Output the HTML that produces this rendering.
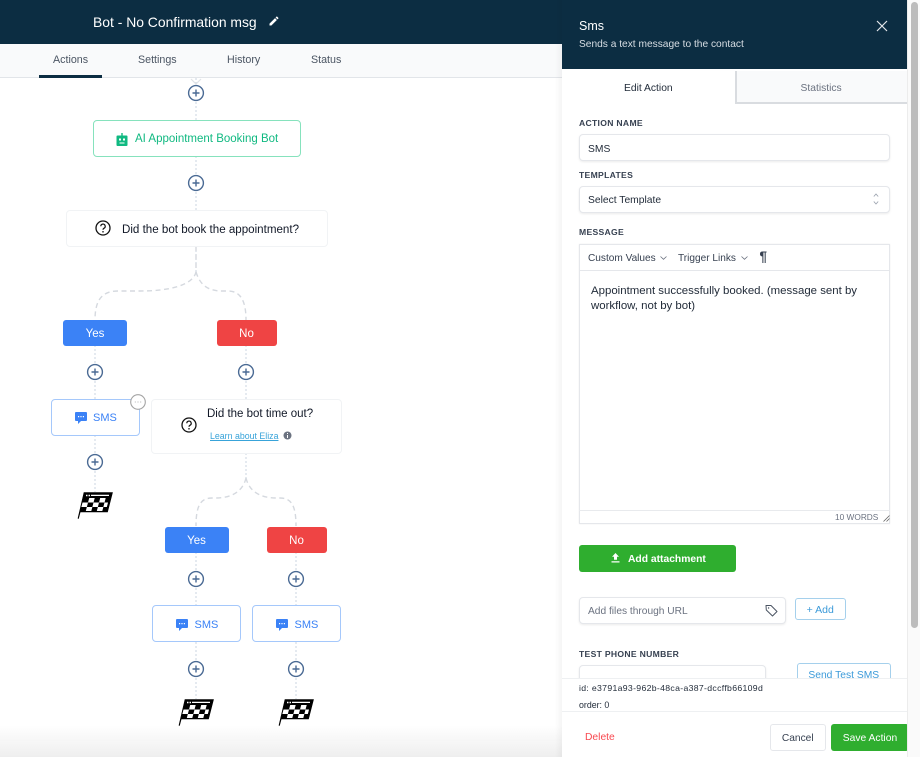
<!DOCTYPE html>
<html><head><meta charset="utf-8"><style>
html,body{margin:0;padding:0;width:920px;height:757px;overflow:hidden;background:#fff;font-family:"Liberation Sans",sans-serif}
#r{position:relative;width:920px;height:757px;overflow:hidden;filter:blur(.25px)}
.a{position:absolute;box-sizing:border-box}
.t{position:absolute;white-space:nowrap;line-height:16px;height:16px}
.c{display:flex;align-items:center;justify-content:center}
.b{padding-top:2px}
.lb{font-size:8.600px;font-weight:bold;color:#374151;letter-spacing:.3px;left:579px}
.in{background:#fff;border:1px solid #e5e7eb;border-radius:4px;box-shadow:0 1px 2px rgba(0,0,0,.08)}
svg{position:absolute;overflow:visible}
</style></head><body><div id="r">

<div class="a" style="left:0;top:0;width:562px;height:44px;background:#0c2d42"></div>
<div class="t" style="left:93px;top:14px;font-size:13.900px;color:#fff">Bot - No Confirmation msg</div>
<svg style="left:268px;top:15px" width="12" height="12" viewBox="0 0 24 24"><path fill="#fff" d="M3 17.250V21h3.750L17.810 9.940l-3.750-3.750L3 17.250zM20.710 7.040a1 1 0 0 0 0-1.410l-2.340-2.340a1 1 0 0 0-1.410 0l-1.830 1.830 3.750 3.750 1.830-1.830z"/></svg>
<div class="a" style="left:0;top:44px;width:562px;height:34px;background:#f9fafb;border-bottom:1px solid #e2e5e9"></div>
<div class="a" style="left:39px;top:74.500px;width:63px;height:3px;background:#0c2d42"></div>
<div class="t" style="left:53px;top:52px;font-size:10.700px;color:#4b5563">Actions</div>
<div class="t" style="left:138px;top:52px;font-size:10.700px;color:#4b5563">Settings</div>
<div class="t" style="left:227px;top:52px;font-size:10.700px;color:#4b5563">History</div>
<div class="t" style="left:311px;top:52px;font-size:10.700px;color:#4b5563">Status</div>

<svg style="left:0;top:0" width="562" height="757">
<g fill="none" stroke="#cbd5e1" stroke-width="1" stroke-dasharray="2 2">
<path d="M196 78V120M196 156V210M196 246V272M95 345V399M95 435V492M246 345V399M246 453V478M196 552V605M196 642V699M296 552V605M296 642V699"/>
</g>
<path d="M191 79L196 84L201 79" fill="none" stroke="#e0e3e7" stroke-width="1.200"/>
<g fill="none" stroke="#d5d9df" stroke-width="1.400" stroke-dasharray="5 3.500">
<path d="M196 246V272C193 285 170 291 140 291H118C102 291 95 300 95 320"/>
<path d="M196 272C200 285 208 291 222 291H228C240 291 246 300 246 320"/>
<path d="M246 478C243 491 232 498 216 498H212C201 498 196 505 196 526"/>
<path d="M246 478C249 491 260 498 276 498H280C291 498 296 505 296 526"/>
</g>
<g fill="#fff" stroke="#4a6a94" stroke-width="1.400">
<circle cx="196" cy="93" r="7.400"/><circle cx="196" cy="183" r="7.400"/>
<circle cx="95" cy="372" r="7.400"/><circle cx="246" cy="372" r="7.400"/>
<circle cx="95" cy="462" r="7.400"/><circle cx="196" cy="579" r="7.400"/>
<circle cx="296" cy="579" r="7.400"/><circle cx="196" cy="669" r="7.400"/><circle cx="296" cy="669" r="7.400"/>
</g>
<g stroke="#4a6a94" stroke-width="1.400" fill="none">
<path d="M192.500 93h7M196 89.500v7M192.500 183h7M196 179.500v7M91.500 372h7M95 368.500v7M242.500 372h7M246 368.500v7M91.500 462h7M95 458.500v7M192.500 579h7M196 575.500v7M292.500 579h7M296 575.500v7M192.500 669h7M196 665.500v7M292.500 669h7M296 665.500v7"/>
</g>
</svg>

<div class="a" style="left:92.500px;top:120px;width:208px;height:36.500px;background:#fff;border:1px solid #86e2bd;border-radius:4px"></div>
<svg style="left:116px;top:132.500px" width="12" height="13" viewBox="0 0 12 13"><path fill="#10b981" d="M5.300 0h1.400v2.500H5.300zM1.500 2.500h9a1 1 0 0 1 1 1V12a1 1 0 0 1-1 1h-9a1 1 0 0 1-1-1V3.500a1 1 0 0 1 1-1z"/><rect x="3" y="5.500" width="2" height="2" fill="#fff"/><rect x="7" y="5.500" width="2" height="2" fill="#fff"/><rect x="3.500" y="9.500" width="5" height="1" fill="#fff"/></svg>
<div class="t" style="left:135px;top:131px;font-size:11.500px;color:#10b981">AI Appointment Booking Bot</div>

<div class="a" style="left:65.500px;top:210px;width:262px;height:36.500px;background:#fff;border:1px solid #f1f3f5;border-radius:4px"></div>
<svg style="left:95px;top:219.500px" width="16" height="16" viewBox="0 0 16 16"><circle cx="8" cy="8" r="7" fill="none" stroke="#111" stroke-width="1.300"/><path d="M5.800 6.300a2.200 2.200 0 1 1 3.300 1.900c-.7.400-1.100.8-1.100 1.600" fill="none" stroke="#111" stroke-width="1.200"/><circle cx="8" cy="11.800" r=".8" fill="#111"/></svg>
<div class="t" style="left:122px;top:222px;font-size:11.580px;color:#111827">Did the bot book the appointment?</div>

<div class="a c b" style="left:63px;top:319.500px;width:64px;height:26px;background:#3b82f6;border-radius:3px;color:#fff;font-size:11.500px">Yes</div>
<div class="a c b" style="left:216.500px;top:319.500px;width:60px;height:26px;background:#ef4444;border-radius:3px;color:#fff;font-size:11.500px">No</div>
<div class="a c b" style="left:164.500px;top:526.500px;width:64px;height:26px;background:#3b82f6;border-radius:3px;color:#fff;font-size:11.500px">Yes</div>
<div class="a c b" style="left:266.500px;top:526.500px;width:60px;height:26px;background:#ef4444;border-radius:3px;color:#fff;font-size:11.500px">No</div>

<div class="a" style="left:50.500px;top:399px;width:89px;height:37px;background:#fff;border:1px solid #a5c8fb;border-radius:4px"></div>
<div class="a" style="left:152px;top:605px;width:89px;height:37px;background:#fff;border:1px solid #a5c8fb;border-radius:4px"></div>
<div class="a" style="left:252px;top:605px;width:89px;height:37px;background:#fff;border:1px solid #a5c8fb;border-radius:4px"></div>

<svg style="left:74.500px;top:412px" width="12" height="12" viewBox="0 0 12 12"><path fill="#3b82f6" d="M1 0h10a1 1 0 0 1 1 1v7a1 1 0 0 1-1 1H6l-3 3V9H1a1 1 0 0 1-1-1V1a1 1 0 0 1 1-1z"/><path fill="#fff" d="M3 4h1.200v1.200H3zM5.400 4h1.200v1.200H5.400zM7.800 4H9v1.200H7.800z"/></svg>
<div class="t" style="left:93px;top:410px;font-size:11px;color:#3b82f6">SMS</div>
<svg style="left:176px;top:618.500px" width="12" height="12" viewBox="0 0 12 12"><path fill="#3b82f6" d="M1 0h10a1 1 0 0 1 1 1v7a1 1 0 0 1-1 1H6l-3 3V9H1a1 1 0 0 1-1-1V1a1 1 0 0 1 1-1z"/><path fill="#fff" d="M3 4h1.200v1.200H3zM5.400 4h1.200v1.200H5.400zM7.800 4H9v1.200H7.800z"/></svg>
<div class="t" style="left:194.500px;top:616.500px;font-size:11px;color:#3b82f6">SMS</div>
<svg style="left:276px;top:618.500px" width="12" height="12" viewBox="0 0 12 12"><path fill="#3b82f6" d="M1 0h10a1 1 0 0 1 1 1v7a1 1 0 0 1-1 1H6l-3 3V9H1a1 1 0 0 1-1-1V1a1 1 0 0 1 1-1z"/><path fill="#fff" d="M3 4h1.200v1.200H3zM5.400 4h1.200v1.200H5.400zM7.800 4H9v1.200H7.800z"/></svg>
<div class="t" style="left:294.500px;top:616.500px;font-size:11px;color:#3b82f6">SMS</div>

<div class="a" style="left:151px;top:399px;width:191px;height:54.500px;background:#fff;border:1px solid #f1f3f5;border-radius:4px"></div>
<svg style="left:129.500px;top:393.500px" width="16" height="16" viewBox="0 0 16 16"><circle cx="8" cy="8" r="7.300" fill="#fff" stroke="#a3a3a3" stroke-width="1.100"/><path d="M4.800 8h1M7.500 8h1M10.200 8h1" stroke="#b5b5b5" stroke-width="1"/></svg>
<svg style="left:180.500px;top:417px" width="16" height="16" viewBox="0 0 16 16"><circle cx="8" cy="8" r="7" fill="none" stroke="#111" stroke-width="1.300"/><path d="M5.800 6.300a2.200 2.200 0 1 1 3.300 1.900c-.7.400-1.100.8-1.100 1.600" fill="none" stroke="#111" stroke-width="1.200"/><circle cx="8" cy="11.800" r=".8" fill="#111"/></svg>
<div class="t" style="left:207px;top:406px;font-size:11.500px;color:#111827">Did the bot time out?</div>
<div class="t" style="left:210px;top:428px;font-size:8.800px;color:#38a3d9;text-decoration:underline">Learn about Eliza</div>
<svg style="left:283px;top:431px" width="9" height="9" viewBox="0 0 9 9"><circle cx="4.500" cy="4.500" r="4" fill="#6b7280"/><rect x="4" y="4" width="1" height="3" fill="#fff"/><rect x="4" y="2" width="1" height="1" fill="#fff"/></svg>

<svg style="left:0;top:0" width="340" height="757">
<g id="f">
<path d="M84 492.500H112.500L107.500 512H80.200L78.500 518.500 78 518.300Z" fill="#000" stroke="#000" stroke-width=".6"/>
<path d="M91 494.700h18v1.300H91zM86 494.700h1.500v1.500H86zM88.500 494.700H90v1.500h-1.500z" fill="#fff"/>
<g transform="translate(84 493) skewX(-14.600)" fill="#fff">
<rect x="6.500" y="5" width="5.500" height="4.500"/><rect x="17.500" y="5" width="5.500" height="4.500"/>
<rect x="1" y="9.500" width="5.500" height="4.500"/><rect x="12" y="9.500" width="5.500" height="4.500"/><rect x="23" y="9.500" width="3.500" height="4.500"/>
<rect x="6.500" y="14" width="5.500" height="4"/><rect x="17.500" y="14" width="5.500" height="4"/>
</g>
</g>
<use href="#f" x="101" y="207"/><use href="#f" x="201" y="207"/>
</svg>

<div class="a" style="left:0;top:725px;width:562px;height:32px;background:linear-gradient(rgba(238,238,238,0),#eeeeee)"></div>

<div class="a" style="left:555px;top:0;width:7px;height:757px;background:linear-gradient(90deg,rgba(0,0,0,0),rgba(0,0,0,.04))"></div>
<div class="a" style="left:562px;top:0;width:345px;height:757px;background:#fff"></div>
<div class="a" style="left:562px;top:0;width:345px;height:69px;background:#0c2d42"></div>
<div class="t" style="left:579px;top:18px;font-size:12.500px;font-weight:500;color:#fff">Sms</div>
<div class="t" style="left:579px;top:37px;font-size:10.200px;color:#d8dee4">Sends a text message to the contact</div>
<svg style="left:876px;top:20px" width="12" height="12" viewBox="0 0 12 12"><path d="M1 1L11 11M11 1L1 11" stroke="#e5e7eb" stroke-width="1.200"/></svg>

<div class="a" style="left:734.500px;top:71px;width:172.500px;height:33px;background:#f9fafb;border-left:2px solid #d9dce0;border-bottom:2px solid #d9dce0"></div>
<div class="t" style="left:624px;top:81px;font-size:10.300px;color:#1f2937">Edit Action</div>
<div class="t" style="left:800.500px;top:81px;font-size:10.300px;color:#6b7280">Statistics</div>

<div class="t lb" style="top:115px">ACTION NAME</div>
<div class="a in" style="left:579px;top:134px;width:311px;height:27px"></div>
<div class="t" style="left:588px;top:142px;font-size:10.300px;color:#1f2937">SMS</div>
<div class="t lb" style="top:167px">TEMPLATES</div>
<div class="a in" style="left:579px;top:186px;width:311px;height:26.500px"></div>
<div class="t" style="left:588px;top:193px;font-size:10.300px;color:#1f2937">Select Template</div>
<svg style="left:873px;top:193px" width="6" height="12" viewBox="0 0 6 12"><path d="M.8 3.500L3 1l2.200 2.500M.8 8.500L3 11l2.200-2.500" fill="none" stroke="#9ca3af" stroke-width=".9"/></svg>
<div class="t lb" style="top:224px">MESSAGE</div>

<div class="a" style="left:579px;top:244px;width:311px;height:279.500px;background:#fff;border:1px solid #e5e7eb;box-shadow:0 0 1px rgba(0,0,0,.1)"></div>
<div class="a" style="left:579px;top:270px;width:311px;height:1px;background:#e5e7eb"></div>
<div class="a" style="left:579px;top:509.500px;width:311px;height:1px;background:#e8eaed"></div>
<div class="t" style="left:588px;top:251px;font-size:10.100px;color:#374151">Custom Values</div>
<svg style="left:660px;top:256px" width="7" height="4" viewBox="0 0 7 4"><path d="M.5.500L3.500 3.300 6.500.500" fill="none" stroke="#6b7280" stroke-width=".8"/></svg>
<div class="t" style="left:678px;top:251px;font-size:10.100px;color:#374151">Trigger Links</div>
<svg style="left:741px;top:256px" width="7" height="4" viewBox="0 0 7 4"><path d="M.5.500L3.500 3.300 6.500.500" fill="none" stroke="#6b7280" stroke-width=".8"/></svg>
<div class="t" style="left:759.500px;top:249px;font-size:13.500px;font-weight:bold;color:#374151">¶</div>
<div class="t" style="left:591px;top:283px;font-size:11.430px;color:#1f2937">Appointment successfully booked. (message sent by</div>
<div class="t" style="left:591px;top:298px;font-size:11.430px;color:#1f2937">workflow, not by bot)</div>
<div class="t" style="left:835px;top:509px;font-size:8.300px;color:#6b7280">10 WORDS</div>
<svg style="left:883px;top:515px" width="7" height="7" viewBox="0 0 7 7"><path d="M.5 6.500L6.500.500M3.500 6.500L6.500 3.500" stroke="#666" stroke-width=".8"/></svg>

<div class="a" style="left:579px;top:545px;width:157px;height:26.500px;background:#2fae2f;border-radius:3px"></div>
<svg style="left:611px;top:553px" width="9" height="10" viewBox="0 0 9 10"><path fill="#fff" d="M4.500 0L8 3.700H6v3H3v-3H1zM.5 8.200h8v1.300h-8z"/></svg>
<div class="t" style="left:628px;top:551.500px;font-size:10.300px;font-weight:bold;color:#fff">Add attachment</div>

<div class="a in" style="left:579px;top:597px;width:207px;height:26.500px"></div>
<div class="t" style="left:588px;top:603.500px;font-size:10.200px;color:#6b7280">Add files through URL</div>
<svg style="left:765px;top:604px" width="13" height="13" viewBox="0 0 13 13"><path d="M1 1.500H6L12 7.500 7.500 12 1.300 6z" fill="none" stroke="#4b5563" stroke-width="1" stroke-linejoin="round"/><circle cx="3.600" cy="4" r=".7" fill="#4b5563"/></svg>
<div class="a c" style="left:794.500px;top:597.500px;width:51.500px;height:22.500px;border:1px solid #a5d0ec;border-radius:3px;font-size:10.500px;color:#3b9ad9;padding-top:2px">+ Add</div>

<div class="t lb" style="top:646px">TEST PHONE NUMBER</div>
<div class="a in" style="left:579px;top:665px;width:187px;height:30px"></div>
<div class="a c" style="left:797px;top:662.500px;width:93.500px;height:30px;border:1px solid #a5d0ec;border-radius:3px;font-size:10.300px;color:#3b9ad9;align-items:flex-start;padding-top:6.500px">Send Test SMS</div>

<div class="a" style="left:562px;top:677.500px;width:345px;height:80px;background:#fff;border-top:1px solid #eef0f2"></div>
<div class="t" style="left:579px;top:680px;font-size:8.700px;color:#1f2937;letter-spacing:.32px">id: e3791a93-962b-48ca-a387-dccffb66109d</div>
<div class="t" style="left:579px;top:697px;font-size:8.800px;color:#1f2937">order: 0</div>
<div class="a" style="left:562px;top:711px;width:345px;height:1px;background:#eef0f2"></div>
<div class="t" style="left:585px;top:730px;font-size:10.300px;color:#f8484f">Delete</div>
<div class="a c b" style="left:770px;top:724px;width:55.500px;height:26.500px;background:#fff;border:1px solid #e5e7eb;border-radius:3px;font-size:10.200px;color:#374151">Cancel</div>
<div class="a c b" style="left:831px;top:724px;width:78px;height:26.500px;background:#2fae2f;border-radius:3px;font-size:10.300px;color:#fff">Save Action</div>

<div class="a" style="left:907px;top:0;width:13px;height:757px;background:#fafafa;border-left:1px solid #ececec"></div>
<div class="a" style="left:910.500px;top:2px;width:7px;height:626px;background:#bcbcbc;border-radius:4px"></div>
</div></body></html>
